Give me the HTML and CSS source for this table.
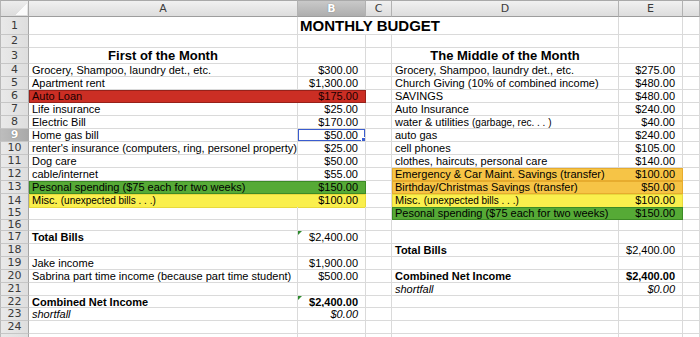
FILE: index.html
```html
<!DOCTYPE html>
<html>
<head>
<meta charset="utf-8">
<link rel="stylesheet" href="styles.css">
</head>
<body>
<div class="sheet">
  <div class="row hdr">
    <div class="corner"></div>
    <div class="ch">A</div>
    <div class="ch sel">B</div>
    <div class="ch">C</div>
    <div class="ch">D</div>
    <div class="ch">E</div>
    <div class="ch"></div>
  </div>
  <div class="row h18">
    <div class="rh">1</div>
    <div class="c"></div>
    <div class="c s3 title">MONTHLY BUDGET</div>
    <div class="c"></div>
    <div class="c"></div>
  </div>
  <div class="row">
    <div class="rh">2</div>
    <div class="c"></div><div class="c"></div><div class="c"></div><div class="c"></div><div class="c"></div><div class="c"></div>
  </div>
  <div class="row h16">
    <div class="rh">3</div>
    <div class="c head">First of the Month</div>
    <div class="c"></div><div class="c"></div>
    <div class="c head">The Middle of the Month</div>
    <div class="c"></div><div class="c"></div>
  </div>
  <div class="row">
    <div class="rh">4</div>
    <div class="c">Grocery, Shampoo, laundry det., etc.</div>
    <div class="c num">$300.00</div>
    <div class="c"></div>
    <div class="c">Grocery, Shampoo, laundry det., etc.</div>
    <div class="c num">$275.00</div>
    <div class="c"></div>
  </div>
  <div class="row">
    <div class="rh">5</div>
    <div class="c">Apartment rent</div>
    <div class="c num">$1,300.00</div>
    <div class="c"></div>
    <div class="c">Church Giving (10% of combined income)</div>
    <div class="c num">$480.00</div>
    <div class="c"></div>
  </div>
  <div class="row">
    <div class="rh">6</div>
    <div class="band ab red">
      <div class="c">Auto Loan</div>
      <div class="c num">$175.00</div>
    </div>
    <div class="c"></div>
    <div class="c">SAVINGS</div>
    <div class="c num">$480.00</div>
    <div class="c"></div>
  </div>
  <div class="row">
    <div class="rh">7</div>
    <div class="c">Life insurance</div>
    <div class="c num">$25.00</div>
    <div class="c"></div>
    <div class="c">Auto Insurance</div>
    <div class="c num">$240.00</div>
    <div class="c"></div>
  </div>
  <div class="row">
    <div class="rh">8</div>
    <div class="c">Electric Bill</div>
    <div class="c num">$170.00</div>
    <div class="c"></div>
    <div class="c">water &amp; utilities <span class="sm">(garbage, rec. . . )</span></div>
    <div class="c num">$40.00</div>
    <div class="c"></div>
  </div>
  <div class="row">
    <div class="rh sel">9</div>
    <div class="c">Home gas bill</div>
    <div class="c num active">$50.00</div>
    <div class="c"></div>
    <div class="c">auto gas</div>
    <div class="c num">$240.00</div>
    <div class="c"></div>
  </div>
  <div class="row">
    <div class="rh">10</div>
    <div class="c">renter's insurance (computers, ring, personel property)</div>
    <div class="c num">$25.00</div>
    <div class="c"></div>
    <div class="c">cell phones</div>
    <div class="c num">$105.00</div>
    <div class="c"></div>
  </div>
  <div class="row">
    <div class="rh">11</div>
    <div class="c">Dog care</div>
    <div class="c num">$50.00</div>
    <div class="c"></div>
    <div class="c">clothes, haircuts, personal care</div>
    <div class="c num">$140.00</div>
    <div class="c"></div>
  </div>
  <div class="row">
    <div class="rh">12</div>
    <div class="c">cable/internet</div>
    <div class="c num">$55.00</div>
    <div class="c"></div>
    <div class="band de orange">
      <div class="c">Emergency &amp; Car Maint. Savings (transfer)</div>
      <div class="c num">$100.00</div>
    </div>
    <div class="c"></div>
  </div>
  <div class="row">
    <div class="rh">13</div>
    <div class="band ab green">
      <div class="c">Pesonal spending ($75 each for two weeks)</div>
      <div class="c num">$150.00</div>
    </div>
    <div class="c"></div>
    <div class="band de orange">
      <div class="c">Birthday/Christmas Savings (transfer)</div>
      <div class="c num">$50.00</div>
    </div>
    <div class="c"></div>
  </div>
  <div class="row">
    <div class="rh">14</div>
    <div class="band ab yellow">
      <div class="c">Misc. <span class="sm">(unexpected bills . . .)</span></div>
      <div class="c num">$100.00</div>
    </div>
    <div class="c"></div>
    <div class="band de yellow">
      <div class="c">Misc. <span class="sm">(unexpected bills . . .)</span></div>
      <div class="c num">$100.00</div>
    </div>
    <div class="c"></div>
  </div>
  <div class="row">
    <div class="rh">15</div>
    <div class="c"></div><div class="c"></div><div class="c"></div>
    <div class="band de green">
      <div class="c">Pesonal spending ($75 each for two weeks)</div>
      <div class="c num">$150.00</div>
    </div>
    <div class="c"></div>
  </div>
  <div class="row h11">
    <div class="rh">16</div>
    <div class="c"></div><div class="c"></div><div class="c"></div><div class="c"></div><div class="c"></div><div class="c"></div>
  </div>
  <div class="row">
    <div class="rh">17</div>
    <div class="c b">Total Bills</div>
    <div class="c num flag">$2,400.00</div>
    <div class="c"></div><div class="c"></div><div class="c"></div><div class="c"></div>
  </div>
  <div class="row">
    <div class="rh">18</div>
    <div class="c"></div><div class="c"></div><div class="c"></div>
    <div class="c b">Total Bills</div>
    <div class="c num">$2,400.00</div>
    <div class="c"></div>
  </div>
  <div class="row">
    <div class="rh">19</div>
    <div class="c">Jake income</div>
    <div class="c num">$1,900.00</div>
    <div class="c"></div><div class="c"></div><div class="c"></div><div class="c"></div>
  </div>
  <div class="row">
    <div class="rh">20</div>
    <div class="c">Sabrina part time income (because part time student)</div>
    <div class="c num">$500.00</div>
    <div class="c"></div>
    <div class="c b">Combined Net Income</div>
    <div class="c num b">$2,400.00</div>
    <div class="c"></div>
  </div>
  <div class="row">
    <div class="rh">21</div>
    <div class="c"></div><div class="c"></div><div class="c"></div>
    <div class="c i">shortfall</div>
    <div class="c num i">$0.00</div>
    <div class="c"></div>
  </div>
  <div class="row h12">
    <div class="rh">22</div>
    <div class="c b">Combined Net Income</div>
    <div class="c num b flag">$2,400.00</div>
    <div class="c"></div><div class="c"></div><div class="c"></div><div class="c"></div>
  </div>
  <div class="row">
    <div class="rh">23</div>
    <div class="c i">shortfall</div>
    <div class="c num i">$0.00</div>
    <div class="c"></div><div class="c"></div><div class="c"></div><div class="c"></div>
  </div>
  <div class="row">
    <div class="rh">24</div>
    <div class="c"></div><div class="c"></div><div class="c"></div><div class="c"></div><div class="c"></div><div class="c"></div>
  </div>
  <div class="row">
    <div class="rh"></div>
    <div class="c"></div><div class="c"></div><div class="c"></div><div class="c"></div><div class="c"></div><div class="c"></div>
  </div>
</div>
</body>
</html>
```
FILE: styles.css
```css
* { box-sizing: border-box; }
html, body { margin: 0; padding: 0; background: #fff; }
body {
  font-family: "Liberation Sans", Arial, sans-serif;
  color: #000;
  overflow: hidden;
  width: 700px;
  height: 337px;
}
.sheet { display: flex; flex-direction: column; width: 700px; }
.row {
  display: grid;
  grid-template-columns: 29px 269px 68px 26px 227px 64px 1fr;
  height: 13px;
  flex: none;
}
.row.hdr { height: 17px; }
.row.h18 { height: 18px; }
.row.h16 { height: 16px; }
.row.h12 { height: 12px; }
.row.h11 { height: 11px; }

/* headers */
.corner {
  border-top: 1px solid #a9a9a9;
  border-right: 1px solid #a9a9a9;
  border-bottom: 1px solid #9d9d9d;
  border-left: 1px solid #b5b5b5;
  background:
    linear-gradient(135deg, transparent 50%, #fbfbfb 50%) right 1px bottom 1px / 11px 11px no-repeat,
    linear-gradient(#ededed, #dcdcdc);
}
.ch {
  border-top: 1px solid #a9a9a9;
  border-right: 1px solid #b2b2b2;
  border-bottom: 1px solid #9d9d9d;
  background: linear-gradient(#f1f1f1, #dddddd);
  font-family: "DejaVu Sans", sans-serif;
  font-size: 11px;
  line-height: 15px;
  text-align: center;
  color: #3c3c3c;
}
.ch.sel {
  background: linear-gradient(#c9c9c9, #aeaeae);
  color: #fff;
  font-weight: bold;
  text-shadow: 0 0 1px #666;
}
.rh {
  display: flex;
  align-items: center;
  justify-content: center;
  border-left: 1px solid #b9b9b9;
  border-right: 1px solid #a6a6a6;
  border-bottom: 1px solid #c6c6c6;
  background: linear-gradient(90deg, #e9e9e9, #dedede);
  font-family: "DejaVu Sans", sans-serif;
  font-size: 11px;
  color: #3a3a3a;
  line-height: 10px;
}
.rh.sel {
  background: linear-gradient(90deg, #bdbdbd, #a9a9a9);
  color: #fff;
  font-weight: bold;
  text-shadow: 0 0 1px #555;
}

/* cells */
.c {
  position: relative;
  border-right: 1px solid #dadada;
  border-bottom: 1px solid #dadada;
  font-size: 11px;
  line-height: 12px;
  padding: 0 3px;
  white-space: nowrap;
  overflow: hidden;
}
.num { text-align: right; padding-right: 7px; }
.b { font-weight: bold; }
.i { font-style: italic; }
.sm { font-size: 10px; }
.s3 { grid-column: span 3; }
.title {
  font-size: 15px;
  font-weight: bold;
  line-height: 16px;
  padding-top: 1px;
  padding-left: 2px;
  overflow: visible;
}
.head {
  font-size: 13px;
  font-weight: bold;
  line-height: 14px;
  padding-top: 1px;
  text-align: center;
}

/* coloured ranges */
.band { display: grid; grid-column: span 2; }
.band.ab { grid-template-columns: 269px 68px; }
.band.de { grid-template-columns: 227px 64px; }
.band .c { border-color: transparent; }
.red { background: #cb2e24; box-shadow: inset 0 0 0 1px #96211a; }
.red .c { color: #1a0000; }
.green { background: #56aa36; box-shadow: inset 0 0 0 1px #3c8a25; }
.yellow { background: #faef4d; box-shadow: inset 0 0 0 1px #e8d93c; }
.orange { background: #f6c446; box-shadow: inset 0 0 0 1px #e7ac2e; }

/* selection */
.active { box-shadow: inset 0 0 0 1px #3a5ccf; }
.active::after {
  content: "";
  position: absolute;
  right: -3px;
  bottom: -3px;
  width: 5px;
  height: 5px;
  background: #3a5ccf;
  border: 1px solid #fff;
}
.flag::before {
  content: "";
  position: absolute;
  left: 0;
  top: 0;
  border-top: 4px solid #2e8b2e;
  border-right: 4px solid transparent;
}
```
